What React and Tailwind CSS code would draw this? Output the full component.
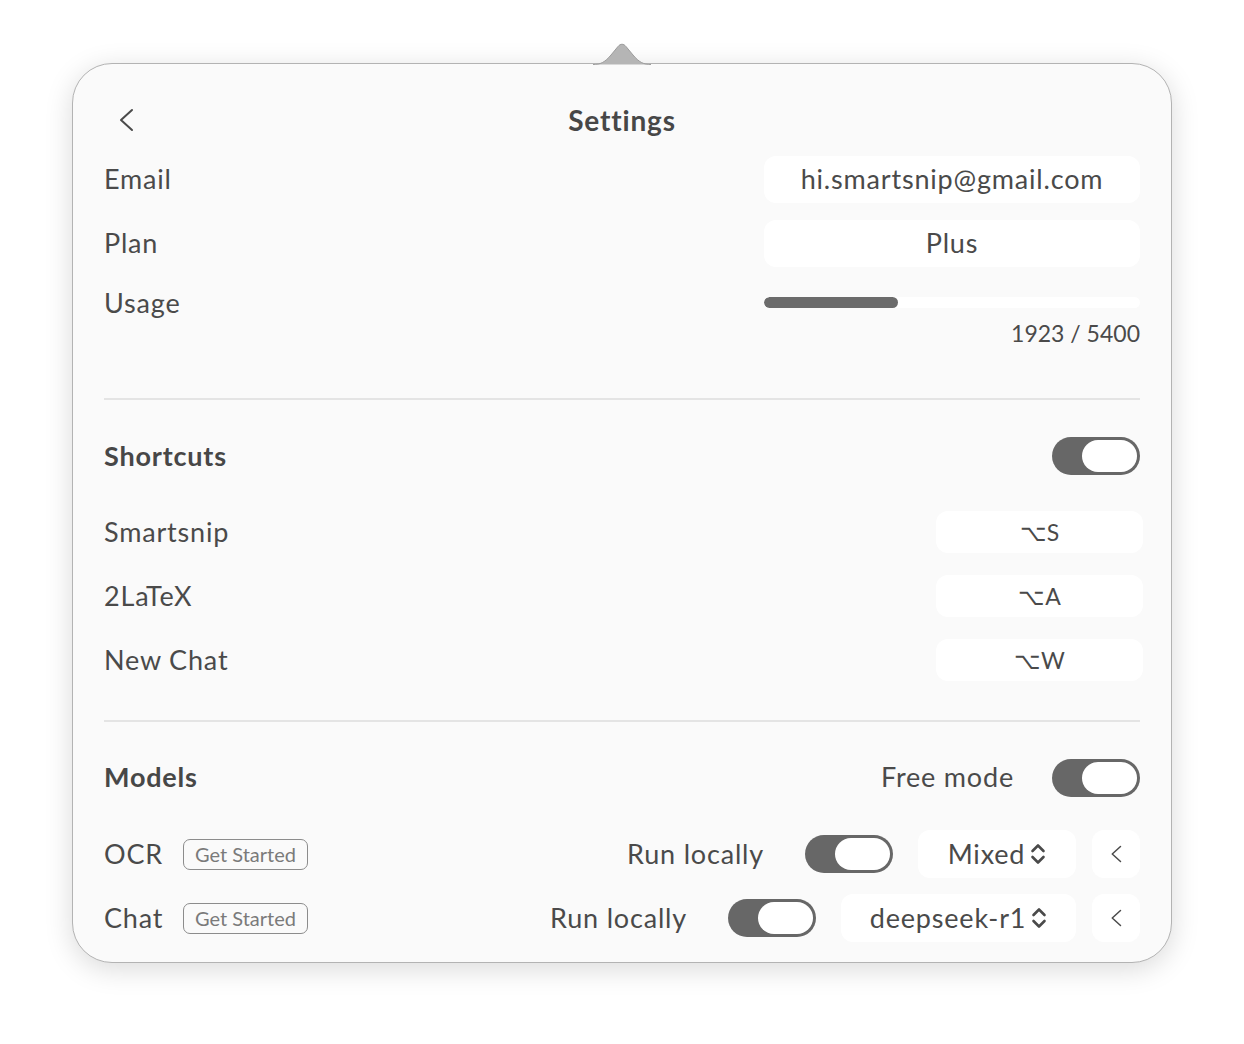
import React from "react";

const font = { fontFamily: "Lato, 'Noto Sans', sans-serif" };

const Chevron = ({ className = "w-[16px] h-[24px]" }) => (
  <svg viewBox="0 0 16 24" className={className} fill="none" stroke="#4a4a4a" strokeWidth="2" strokeLinecap="round" strokeLinejoin="round">
    <path d="M14 2 L3 12 L14 22" />
  </svg>
);

const UpDown = () => (
  <svg viewBox="0 0 16 22" className="w-[16px] h-[22px]" fill="none" stroke="#4a4a4a" strokeWidth="2.6" strokeLinecap="round" strokeLinejoin="round">
    <path d="M2.5 8 L8 2.5 L13.5 8" />
    <path d="M2.5 14 L8 19.5 L13.5 14" />
  </svg>
);

const Toggle = () => (
  <div className="w-[88px] h-[38px] rounded-full bg-[#676767] p-[3px] flex justify-end">
    <div className="w-[55px] h-full rounded-full bg-white" />
  </div>
);

const ValueBox = ({ children }) => (
  <div className="w-[376px] h-[47px] rounded-[12px] bg-white flex items-center justify-center text-[27px] tracking-[0.03em]">
    {children}
  </div>
);

const KeyBox = ({ children }) => (
  <div className="w-[207px] h-[42px] -mr-[3px] rounded-[12px] bg-white flex items-center justify-center text-[23px]">
    {children}
  </div>
);

const Badge = () => (
  <span className="w-[125px] h-[31px] rounded-[7px] border-[1.5px] border-[#8c8c8c] text-[#7a7a7a] text-[20px] flex items-center justify-center">
    Get Started
  </span>
);

const label = "text-[27px] tracking-[0.03em]";
const heading = "text-[27px] font-bold tracking-[0.03em] text-[#474747]";

const ModelRow = ({ name, model, selectW, className = "" }) => (
  <div className={`flex items-center h-[48px] ${className}`}>
    <div className="flex items-center gap-[20px]">
      <span className={`${label} w-[59px]`}>{name}</span>
      <Badge />
    </div>
    <div className="ml-auto flex items-center">
      <span className={label}>Run locally</span>
      <div className="ml-[41px]">
        <Toggle />
      </div>
      <div
        className={`ml-[25px] ${selectW} h-[48px] rounded-[12px] bg-white flex items-center justify-center gap-[5px] ${label}`}
      >
        <span>{model}</span>
        <UpDown />
      </div>
      <div className="ml-[16px] w-[48px] h-[48px] rounded-[12px] bg-white flex items-center justify-center">
        <Chevron className="w-[12px] h-[18px]" />
      </div>
    </div>
  </div>
);

export default function App() {
  return (
    <div className="w-[1244px] h-[1044px] bg-white overflow-hidden pt-[63px] pl-[72px]" style={font}>
      <div className="relative w-[1100px] h-[900px] rounded-[40px] border border-[#b3b3b3] bg-[#fafafa] shadow-[0_6px_28px_rgba(0,0,0,0.15)] px-[31px] text-[#4a4a4a]">
        <svg
          viewBox="0 0 58 23"
          className="absolute -top-[22px] left-[520px] w-[58px] h-[23px]"
        >
          <path
            d="M0 22.5 C8 22.5 12 20 18 13 L25 4.5 C27.5 1.5 30.5 1.5 33 4.5 L40 13 C46 20 50 22.5 58 22.5"
            fill="#b5b5b5"
            stroke="#9c9c9c"
            strokeWidth="1"
          />
        </svg>

        {/* header */}
        <div className="mt-[32px] h-[48px] grid grid-cols-[1fr_auto_1fr] items-center">
          <div className="pl-[14px]">
            <Chevron />
          </div>
          <span className="text-[28px] font-bold tracking-[0.03em] text-[#474747]">Settings</span>
          <div />
        </div>

        {/* account */}
        <div className="mt-[12px] flex items-center justify-between h-[47px]">
          <span className={label}>Email</span>
          <ValueBox>hi.smartsnip@gmail.com</ValueBox>
        </div>
        <div className="mt-[17px] flex items-center justify-between h-[47px]">
          <span className={label}>Plan</span>
          <ValueBox>Plus</ValueBox>
        </div>
        <div className="mt-[20px] flex justify-between">
          <span className={`${label} leading-[32px]`}>Usage</span>
          <div className="w-[376px] pt-[10px]">
            <div className="h-[11px] rounded-full bg-white overflow-hidden">
              <div className="h-full rounded-full bg-[#6b6b6b]" style={{ width: `${(1923 / 5400) * 100}%` }} />
            </div>
            <div className="mt-[11px] text-right text-[23px] leading-[28px]">1923 / 5400</div>
          </div>
        </div>

        <div className="mt-[51px] h-[2px] bg-[#e4e4e4]" />

        {/* shortcuts */}
        <div className="mt-[37px] h-[38px] flex items-center justify-between">
          <span className={heading}>Shortcuts</span>
          <Toggle />
        </div>
        <div className="mt-[36px] flex flex-col gap-[22px]">
          {[
            ["Smartsnip", "⌥S"],
            ["2LaTeX", "⌥A"],
            ["New Chat", "⌥W"],
          ].map(([name, keys]) => (
            <div key={name} className="h-[42px] flex items-center justify-between">
              <span className={label}>{name}</span>
              <KeyBox>{keys}</KeyBox>
            </div>
          ))}
        </div>

        <div className="mt-[39px] h-[2px] bg-[#e4e4e4]" />

        {/* models */}
        <div className="mt-[36px] h-[39px] flex items-center">
          <span className={heading}>Models</span>
          <span className={`ml-auto ${label}`}>Free mode</span>
          <div className="ml-[38px]">
            <Toggle />
          </div>
        </div>
        <ModelRow className="mt-[33px]" name="OCR" model="Mixed" selectW="w-[158px]" />
        <ModelRow className="mt-[16px]" name="Chat" model="deepseek-r1" selectW="w-[235px]" />
      </div>
    </div>
  );
}
